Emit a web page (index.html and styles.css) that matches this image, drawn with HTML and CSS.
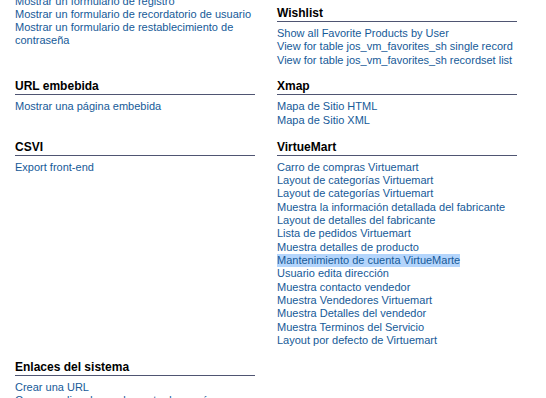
FILE: index.html
```html
<!DOCTYPE html>
<html lang="es">
<head>
<meta charset="utf-8">
<title>Tipos de elemento de menú</title>
<link rel="stylesheet" href="styles.css">
</head>
<body>
<div class="page">
  <div class="grid">
    <section class="block block-cont">
      <ul class="links">
        <li><a href="#">Mostrar un formulario de registro</a></li>
        <li><a href="#">Mostrar un formulario de recordatorio de usuario</a></li>
        <li><a href="#">Mostrar un formulario de restablecimiento de contraseña</a></li>
      </ul>
    </section>
    <section class="block">
      <h3 class="title">Wishlist</h3>
      <ul class="links">
        <li><a href="#">Show all Favorite Products by User</a></li>
        <li><a href="#">View for table jos_vm_favorites_sh single record</a></li>
        <li><a href="#">View for table jos_vm_favorites_sh recordset list</a></li>
      </ul>
    </section>

    <section class="block">
      <h3 class="title">URL embebida</h3>
      <ul class="links">
        <li><a href="#">Mostrar una página embebida</a></li>
      </ul>
    </section>
    <section class="block">
      <h3 class="title">Xmap</h3>
      <ul class="links">
        <li><a href="#">Mapa de Sitio HTML</a></li>
        <li><a href="#">Mapa de Sitio XML</a></li>
      </ul>
    </section>

    <section class="block">
      <h3 class="title">CSVI</h3>
      <ul class="links">
        <li><a href="#">Export front-end</a></li>
      </ul>
    </section>
    <section class="block">
      <h3 class="title">VirtueMart</h3>
      <ul class="links">
        <li><a href="#">Carro de compras Virtuemart</a></li>
        <li><a href="#">Layout de categorías Virtuemart</a></li>
        <li><a href="#">Layout de categorías Virtuemart</a></li>
        <li><a href="#">Muestra la información detallada del fabricante</a></li>
        <li><a href="#">Layout de detalles del fabricante</a></li>
        <li><a href="#">Lista de pedidos Virtuemart</a></li>
        <li><a href="#">Muestra detalles de producto</a></li>
        <li><a href="#" class="selected">Mantenimiento de cuenta VirtueMarte</a></li>
        <li><a href="#">Usuario edita dirección</a></li>
        <li><a href="#">Muestra contacto vendedor</a></li>
        <li><a href="#">Muestra Vendedores Virtuemart</a></li>
        <li><a href="#">Muestra Detalles del vendedor</a></li>
        <li><a href="#">Muestra Terminos del Servicio</a></li>
        <li><a href="#">Layout por defecto de Virtuemart</a></li>
      </ul>
    </section>

    <section class="block">
      <h3 class="title">Enlaces del sistema</h3>
      <ul class="links">
        <li><a href="#">Crear una URL</a></li>
        <li><a href="#">Crear un alias de un elemento de menú existente</a></li>
      </ul>
    </section>
    <section class="block"></section>
  </div>
</div>
</body>
</html>
```

FILE: styles.css
```css
html, body {
  margin: 0;
  padding: 0;
  background: #ffffff;
}

body {
  font-family: "Liberation Sans", Arial, Helvetica, sans-serif;
  font-size: 11px;
  color: #000000;
  overflow: hidden;
}

.page {
  padding: 6px 0 0 15px;
}

.grid {
  display: grid;
  grid-template-columns: 240px 240px;
  column-gap: 22px;
  row-gap: 12.5px;
  align-items: start;
}

.block-cont {
  margin-top: -11.5px;
}

.title {
  margin: 0;
  font-size: 12px;
  font-weight: bold;
  line-height: 15px;
  color: #000000;
  border-bottom: 1px solid #4f5572;
}

.links {
  list-style: none;
  margin: 5px 0 0 0;
  padding: 0;
}

.block-cont .links {
  margin-top: 0;
}

.links li {
  line-height: 13.33px;
}

.links a {
  color: #165a98;
  text-decoration: none;
}

.links a.selected {
  display: inline-block;
  background: #b4d5fc;
}
```
